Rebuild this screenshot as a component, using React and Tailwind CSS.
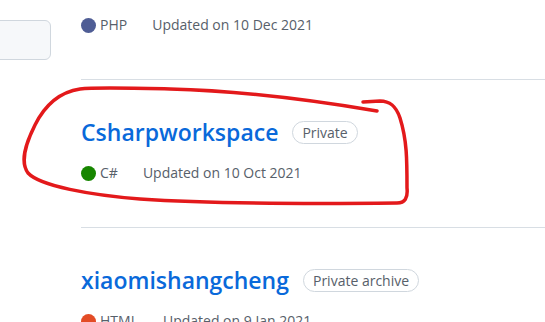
import React from "react";

const repos = [
  { name: "phpworkspace", badge: "Private", lang: "PHP", color: "bg-[#4f5d95]", updated: "Updated on 10 Dec 2021" },
  { name: "Csharpworkspace", badge: "Private", lang: "C#", color: "bg-[#178600]", updated: "Updated on 10 Oct 2021" },
  { name: "xiaomishangcheng", badge: "Private archive", lang: "HTML", color: "bg-[#e34c26]", updated: "Updated on 9 Jan 2021" },
];

const RepoItem = ({ repo }) => (
  <li className="border-b border-[#d8dee4] pt-[36px] pb-[44px]">
    <div className="flex h-[32px] items-center">
      <a className="text-[23px] font-semibold leading-[32px] text-[#0969da]">{repo.name}</a>
      <span className="ml-[14px] rounded-full border border-[#d0d7de] px-[9px] text-[14px] leading-[21px] text-[#57606a]">
        {repo.badge}
      </span>
    </div>
    <div className="mt-[15px] flex h-[20px] items-center text-[14px] leading-[20px] text-[#57606a]">
      <span className={`h-[15px] w-[15px] rounded-full ${repo.color}`} />
      <span className="ml-[4px] mr-[25px]">{repo.lang}</span>
      <span>{repo.updated}</span>
    </div>
  </li>
);

export default function App() {
  return (
    <div className="relative h-[322px] w-[545px] overflow-hidden bg-white font-['Open_Sans',sans-serif]">
      <div className="flex">
        {/* left sidebar button, cut off by the window */}
        <div className="w-[81px] shrink-0 pt-[20px]">
          <div className="-ml-[12px] h-[40px] w-[63px] rounded-[6px] border border-[#d0d7de] bg-[#f6f8fa]" />
        </div>

        {/* repository list */}
        <ul className="-mt-[68px] flex-1">
          {repos.map((repo) => (
            <RepoItem key={repo.name} repo={repo} />
          ))}
        </ul>
      </div>

      {/* red marker annotation */}
      <svg className="pointer-events-none absolute left-0 top-0" width="545" height="322" viewBox="0 0 545 322" fill="none">
        <path
          d="M377 111 C 330 103, 250 91, 170 89 C 130 88, 95 87, 80 89 C 60 92, 45 105, 35 125 C 25 145, 20 162, 28 173 C 40 186, 90 195, 140 199 C 200 203, 300 204, 397 203 C 405 203, 408 198, 407 188 C 407 160, 407 140, 400 118 C 396 106, 390 101, 380 101 L 363 102"
          stroke="#e3191b"
          strokeWidth="3.5"
          strokeLinecap="round"
          strokeLinejoin="round"
        />
      </svg>
    </div>
  );
}
